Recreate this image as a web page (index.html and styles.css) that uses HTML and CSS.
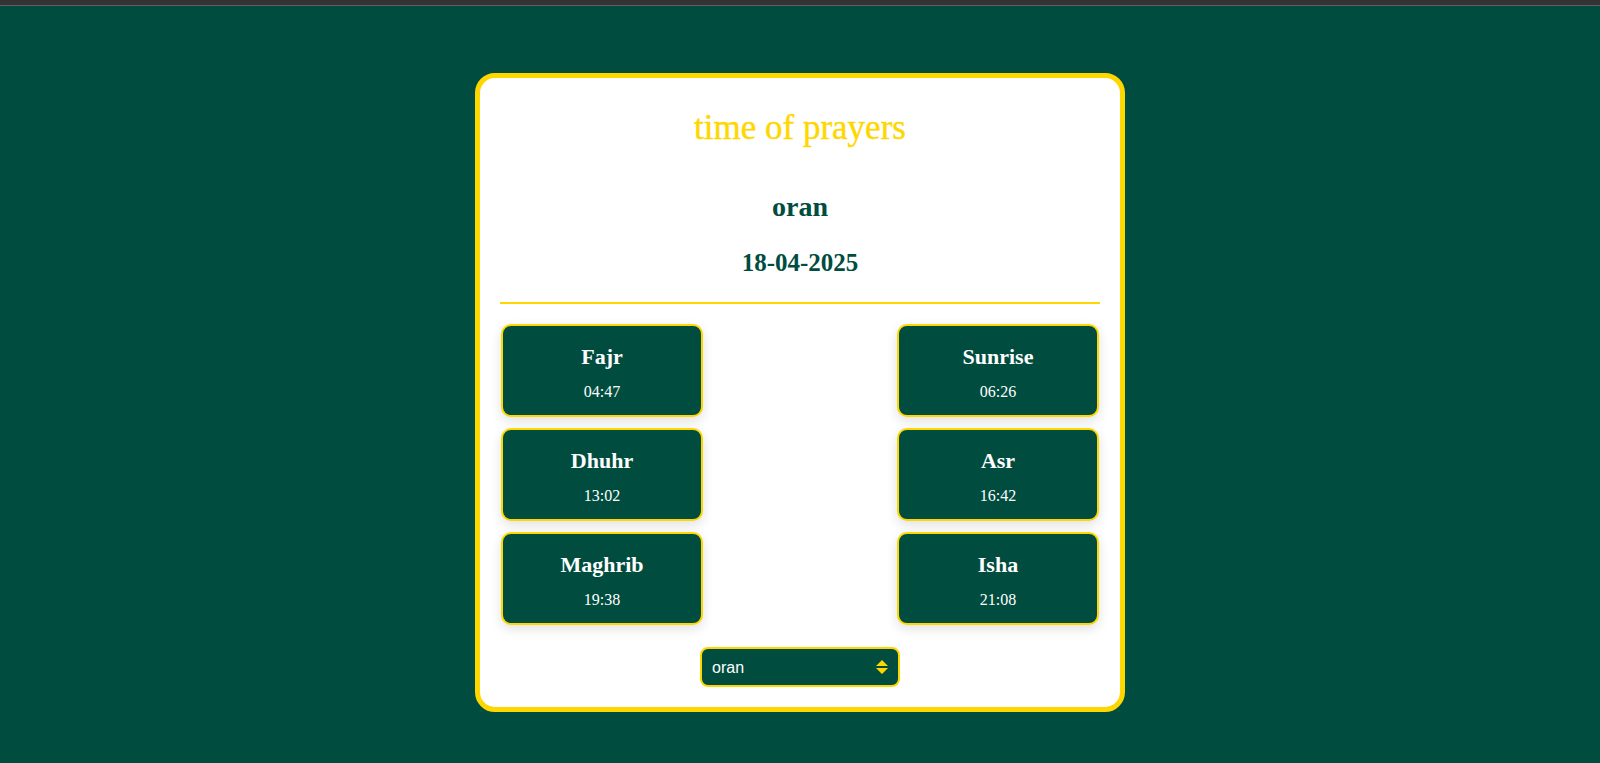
FILE: index.html
```html
<!DOCTYPE html>
<html lang="en">
<head>
<meta charset="utf-8">
<title>time of prayers</title>
<link rel="stylesheet" href="styles.css">
</head>
<body>
<div class="topbar"></div>
<main class="page">
  <section class="card">
    <h1 class="title">time of prayers</h1>
    <h2 class="city">oran</h2>
    <p class="date">18-04-2025</p>
    <hr class="divider">
    <div class="grid">
      <div class="prayer"><div class="name">Fajr</div><div class="time">04:47</div></div>
      <div class="prayer"><div class="name">Sunrise</div><div class="time">06:26</div></div>
      <div class="prayer"><div class="name">Dhuhr</div><div class="time">13:02</div></div>
      <div class="prayer"><div class="name">Asr</div><div class="time">16:42</div></div>
      <div class="prayer"><div class="name">Maghrib</div><div class="time">19:38</div></div>
      <div class="prayer"><div class="name">Isha</div><div class="time">21:08</div></div>
    </div>
    <div class="select-row">
      <span class="select-wrap">
        <select class="city-select">
          <option>oran</option>
          <option>alger</option>
          <option>constantine</option>
        </select>
        <svg class="arrows" width="12" height="14" viewBox="0 0 12 14"><path d="M6 0 L12 6 L0 6 Z M0 8 L12 8 L6 14 Z" fill="#FFD700"/></svg>
      </span>
    </div>
  </section>
</main>
</body>
</html>
```

FILE: styles.css
```css
html, body {
  margin: 0;
  padding: 0;
}
body {
  background: #004D40;
  font-family: "Liberation Serif", "Times New Roman", serif;
  min-height: 763px;
}
.topbar {
  height: 5px;
  background: #333333;
  border-bottom: 1px solid #606060;
}
.page {
  display: flex;
  justify-content: center;
  padding-top: 67px;
}
.card {
  box-sizing: border-box;
  width: 650px;
  background: #ffffff;
  border: 5px solid #FFD700;
  border-radius: 20px;
  padding: 20px 20px 20px;
  text-align: center;
}
.title {
  margin: 10px 0 0;
  font-size: 35px;
  line-height: 40px;
  font-weight: normal;
  color: #FFD700;
  -webkit-text-stroke: 0.4px #FFD700;
}
.city {
  margin: 42px 0 0;
  font-size: 28px;
  line-height: 34px;
  font-weight: bold;
  color: #004D40;
}
.date {
  margin: 24px 0 0;
  font-size: 25px;
  line-height: 30px;
  font-weight: bold;
  color: #004D40;
}
.divider {
  margin: 24px 0 0;
  height: 2px;
  border: none;
  background: #FFD700;
}
.grid {
  margin-top: 20px;
  display: grid;
  grid-template-columns: 202px 202px;
  justify-content: space-between;
  row-gap: 11px;
  padding: 0 1px;
}
.prayer {
  box-sizing: border-box;
  height: 93px;
  background: #004D40;
  border: 2px solid #FFD700;
  border-radius: 10px;
  padding-top: 18px;
  color: #ffffff;
  box-shadow: 0 4px 12px rgba(0, 0, 0, 0.12);
}
.name {
  font-size: 22px;
  line-height: 26px;
  font-weight: bold;
}
.time {
  margin-top: 12px;
  font-size: 16px;
  line-height: 20px;
}
.select-row {
  margin-top: 22px;
  display: flex;
  justify-content: center;
}
.select-wrap {
  position: relative;
  display: inline-block;
}
.city-select {
  -webkit-appearance: none;
  appearance: none;
  box-sizing: border-box;
  width: 200px;
  height: 40px;
  background: #004D40;
  color: #ffffff;
  border: 2px solid #FFD700;
  border-radius: 8px;
  padding: 0 30px 0 10px;
  font-family: "Liberation Sans", Arial, sans-serif;
  font-size: 16px;
  outline: none;
  display: block;
}
.arrows {
  position: absolute;
  right: 12px;
  top: 13px;
  pointer-events: none;
}
```
